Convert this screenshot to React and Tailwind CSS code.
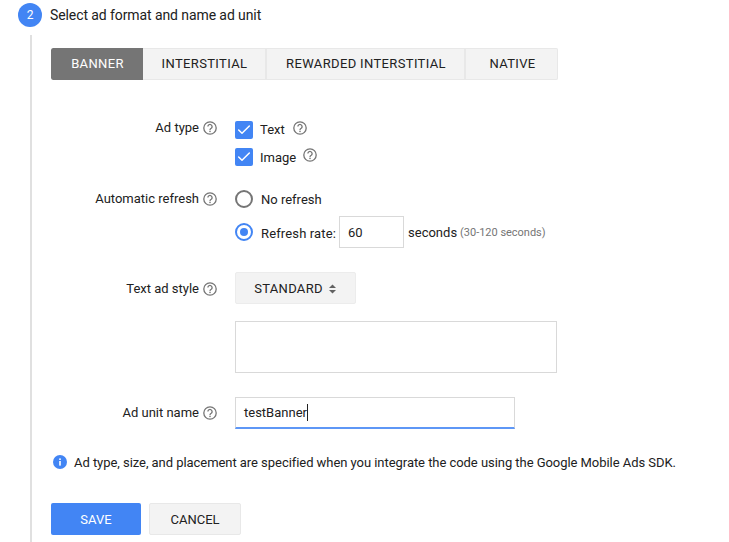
import { Check } from 'lucide-react';

function Help({ className = '' }) {
    return (
        <svg width="14" height="14" viewBox="0 0 14 14" fill="none" className={className}>
            <circle cx="7" cy="7" r="6.2" stroke="#757575" strokeWidth="1.3" />
            <path d="M4.9 5.6a2.1 2.1 0 1 1 3.3 1.7c-.8.5-1.2.8-1.2 1.7" stroke="#757575" strokeWidth="1.3" />
            <rect x="6.3" y="9.7" width="1.4" height="1.4" fill="#757575" />
        </svg>
    );
}

function Label({ children, className = '' }) {
    return (
        <div className={`flex w-[166px] shrink-0 items-center justify-end gap-[4px] ${className}`}>
            <span>{children}</span>
            <Help />
        </div>
    );
}

function CheckRow({ label, helpGap, textClass = '' }) {
    return (
        <div className="flex h-[18px] items-center">
            <span className="flex h-[18px] w-[18px] items-center justify-center rounded-[2px] bg-[#4285f4]">
                <Check size={16} color="#fff" strokeWidth={2.2} />
            </span>
            <span className={`ml-[7px] ${textClass}`}>{label}</span>
            <Help className={`self-start ${helpGap}`} />
        </div>
    );
}

const tabs = [
    { name: 'BANNER', w: 'w-[92px]', cls: 'bg-[#757575] text-[#fff] rounded-l-[2px]' },
    { name: 'INTERSTITIAL', w: 'w-[124px]', cls: 'border-r-2 border-[#e8e8e8]' },
    { name: 'REWARDED INTERSTITIAL', w: 'w-[199px]', cls: 'border-r-2 border-[#e8e8e8]' },
    { name: 'NATIVE', w: 'w-[92px]', cls: 'rounded-r-[2px]' },
];

export default function App() {
    return (
        <div className="h-[542px] overflow-hidden bg-white pl-[18px] pt-[3px] font-['Roboto',sans-serif] text-[13px] leading-[18px] text-[#212121]">
            {/* Step header */}
            <div className="flex h-[24px] items-center">
                <span className="flex h-[24px] w-[24px] items-center justify-center rounded-full bg-[#4285f4] text-[12px] text-white">2</span>
                <span className="ml-[8px] text-[14px] tracking-[-0.09px]">Select ad format and name ad unit</span>
            </div>

            <div className="ml-[12px] mt-[8px] h-[520px] border-l-2 border-[#e0e0e0] pl-[19px] pt-[13px]">
                {/* Format tabs */}
                <div className="flex h-[32px] w-[507px] overflow-hidden rounded-[2px] bg-[#f3f3f3] text-[13px] tracking-[0.36px] shadow-[inset_0_0_0_1px_#e8e8e8]">
                    {tabs.map(t => (
                        <div key={t.name} className={`flex h-full items-center justify-center pl-[1px] ${t.w} ${t.cls}`}>{t.name}</div>
                    ))}
                </div>

                {/* Ad type */}
                <div className="mt-[41px] flex">
                    <Label className="h-[14px]">Ad type</Label>
                    <div className="ml-[18px] flex flex-col gap-[9px]">
                        <CheckRow label="Text" helpGap="ml-[8px]" />
                        <CheckRow label="Image" helpGap="ml-[7px]" textClass="pt-[2px]" />
                    </div>
                </div>

                {/* Automatic refresh */}
                <div className="mt-[23px] flex">
                    <Label className="h-[20px]">Automatic refresh</Label>
                    <div className="ml-[18px] flex flex-col">
                        <div className="flex h-[20px] items-center">
                            <span className="h-[18px] w-[18px] rounded-full border-2 border-[#757575]" />
                            <span className="ml-[8px] pt-[1px]">No refresh</span>
                        </div>
                        <div className="mt-[7px] flex h-[32px] items-center">
                            <span className="flex h-[18px] w-[18px] items-center justify-center rounded-full border-2 border-[#4285f4]">
                                <span className="h-[8px] w-[8px] rounded-full bg-[#4285f4]" />
                            </span>
                            <span className="ml-[8px] pt-[3px] tracking-[0.14px]">Refresh rate:</span>
                            <div className="ml-[3px] flex h-[32px] w-[65px] items-center border border-[#d9d9d9] pl-[8px] pt-[1px]">60</div>
                            <span className="ml-[4px] pt-[1px]">seconds</span>
                            <span className="ml-[3px] pt-[1px] text-[11px] tracking-[-0.02px] text-[#757575]">(30-120 seconds)</span>
                        </div>
                    </div>
                </div>

                {/* Text ad style */}
                <div className="mt-[24px] flex">
                    <Label className="h-[34px]">Text ad style</Label>
                    <div className="ml-[18px] flex flex-col">
                        <div className="flex h-[32px] w-[121px] items-center justify-center gap-[5px] rounded-[2px] border border-[#ececec] bg-[#f3f3f3] pt-[1px] tracking-[0.3px]">
                            STANDARD
                            <svg width="9" height="10" viewBox="0 0 9 10" fill="#616161">
                                <path d="M4.5 0.5 8 4H1z" />
                                <path d="M4.5 9.5 8 6H1z" />
                            </svg>
                        </div>
                        <div className="mt-[17px] h-[52px] w-[322px] border border-[#d9d9d9]" />
                    </div>
                </div>

                {/* Ad unit name */}
                <div className="mt-[24px] flex">
                    <Label className="h-[32px]">Ad unit name</Label>
                    <div className="ml-[18px] flex h-[32px] w-[280px] items-center border border-b-2 border-[#d9d9d9] border-b-[#5e97f6] pl-[8px]">
                        testBanner<span className="h-[17px] w-px bg-[#212121]" />
                    </div>
                </div>

                {/* Info note */}
                <div className="mt-[24px] flex h-[18px] items-center pl-[2px]">
                    <svg width="14" height="14" viewBox="0 0 14 14" className="-mt-[1px]">
                        <circle cx="7" cy="7" r="7" fill="#4285f4" />
                        <rect x="6.2" y="6" width="1.6" height="4.6" fill="#fff" />
                        <rect x="6.2" y="3.4" width="1.6" height="1.6" fill="#fff" />
                    </svg>
                    <span className="ml-[7px] pt-[2px] tracking-[-0.05px]">Ad type, size, and placement are specified when you integrate the code using the Google Mobile Ads SDK.</span>
                </div>

                {/* Actions */}
                <div className="mt-[32px] flex gap-[8px]">
                    <button className="h-[32px] w-[90px] rounded-[2px] bg-[#4285f4] pt-[2px] text-[13px] text-white">SAVE</button>
                    <button className="h-[32px] w-[92px] rounded-[2px] border border-[#e8e8e8] bg-[#f3f3f3] pt-[2px] text-[13px]">CANCEL</button>
                </div>
            </div>
        </div>
    );
}
